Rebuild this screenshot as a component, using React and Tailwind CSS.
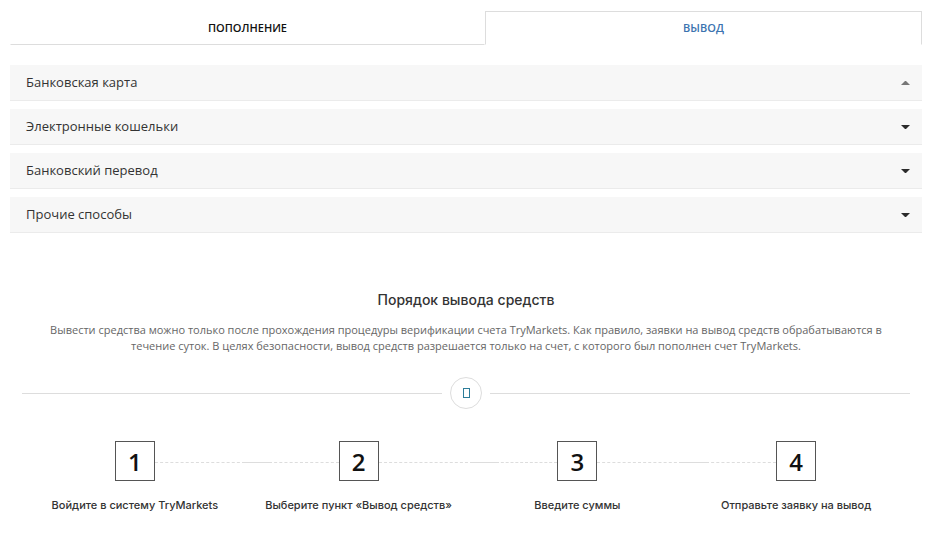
import React, { useState } from "react";

const tabs = [
  { id: "deposit", title: "Пополнение" },
  { id: "withdraw", title: "Вывод" },
];

const methods = [
  "Банковская карта",
  "Электронные кошельки",
  "Банковский перевод",
  "Прочие способы",
];

const steps = [
  "Войдите в систему TryMarkets",
  "Выберите пункт «Вывод средств»",
  "Введите суммы",
  "Отправьте заявку на вывод",
];

const Caret = ({ open }) => (
  <svg
    width="9"
    height="4"
    viewBox="0 0 9 4"
    className={open ? "rotate-180 fill-[#777777]" : "fill-[#2b2b2b]"}
  >
    <path d="M0 0h9L5 4h-1z" />
  </svg>
);

const App = () => {
  const [activeTab, setActiveTab] = useState("withdraw");
  const [openMethod, setOpenMethod] = useState(0);

  return (
    <div className="bg-white pl-[10px] pr-3 pt-[11px] font-['Open_Sans',sans-serif]">
      <div role="tablist" className="grid grid-cols-[475fr_437fr]">
        {tabs.map((tab) => (
          <button
            key={tab.id}
            type="button"
            role="tab"
            aria-selected={activeTab === tab.id}
            onClick={() => setActiveTab(tab.id)}
            className={`h-[34px] border text-[11px] font-semibold uppercase ${
              activeTab === tab.id
                ? "border-[#dddddd] border-b-transparent text-[#3b73af]"
                : "border-transparent border-b-[#dddddd] text-[#111111]"
            }`}
          >
            {tab.title}
          </button>
        ))}
      </div>

      <div className="mt-5 flex flex-col gap-2">
        {methods.map((method, i) => (
          <button
            key={method}
            type="button"
            aria-expanded={openMethod === i}
            onClick={() => setOpenMethod(openMethod === i ? -1 : i)}
            className="flex h-9 items-center justify-between border-b border-[#ebebeb] bg-[#f7f7f7] pl-4 pr-3 text-[13px] text-[#333333]"
          >
            {method}
            <Caret open={openMethod === i} />
          </button>
        ))}
      </div>

      <section className="px-3 pt-[57px]">
        <h2 className="text-center font-['Inter',sans-serif] text-[14px] leading-5 font-medium text-[#333333]">
          Порядок вывода средств
        </h2>
        <p className="mt-3 px-3 text-center text-[11px] leading-4 text-[#666666]">
          Вывести средства можно только после прохождения процедуры верификации
          счета TryMarkets. Как правило, заявки на вывод средств обрабатываются
          в течение суток. В целях безопасности, вывод средств разрешается
          только на счет, с которого был пополнен счет TryMarkets.
        </p>

        <div className="mt-[23px] flex items-center gap-2">
          <div className="h-px flex-1 bg-[#dddddd]"></div>
          <div className="flex size-8 items-center justify-center rounded-full border border-[#dddddd]">
            <div className="h-[10px] w-[7px] border border-[#2d7d9a]"></div>
          </div>
          <div className="h-px flex-1 bg-[#dddddd]"></div>
        </div>

        <ol className="mt-8 grid grid-cols-[220fr_228fr_210fr_228fr] pb-8 pl-[3px]">
          {steps.map((step, i) => (
            <li key={step}>
              <div className="flex items-center">
                <div className="flex flex-1 pt-0.5">
                  {i > 0 && (
                    <>
                      <div className="w-6 border-t border-[#dddddd]"></div>
                      <div className="flex-1 border-t border-dashed border-[#dddddd]"></div>
                    </>
                  )}
                </div>
                <div className="flex size-10 items-center justify-center border border-[#555555] pt-0.5 text-2xl font-semibold text-[#111111]">
                  {i + 1}
                </div>
                <div className="flex flex-1 pt-0.5">
                  {i < steps.length - 1 && (
                    <div className="flex-1 border-t border-dashed border-[#dddddd]"></div>
                  )}
                </div>
              </div>
              <h3 className="mt-4 text-center font-['Inter',sans-serif] text-[11px] leading-4 font-medium text-[#333333]">
                {step}
              </h3>
            </li>
          ))}
        </ol>
      </section>
    </div>
  );
};

export default App;
